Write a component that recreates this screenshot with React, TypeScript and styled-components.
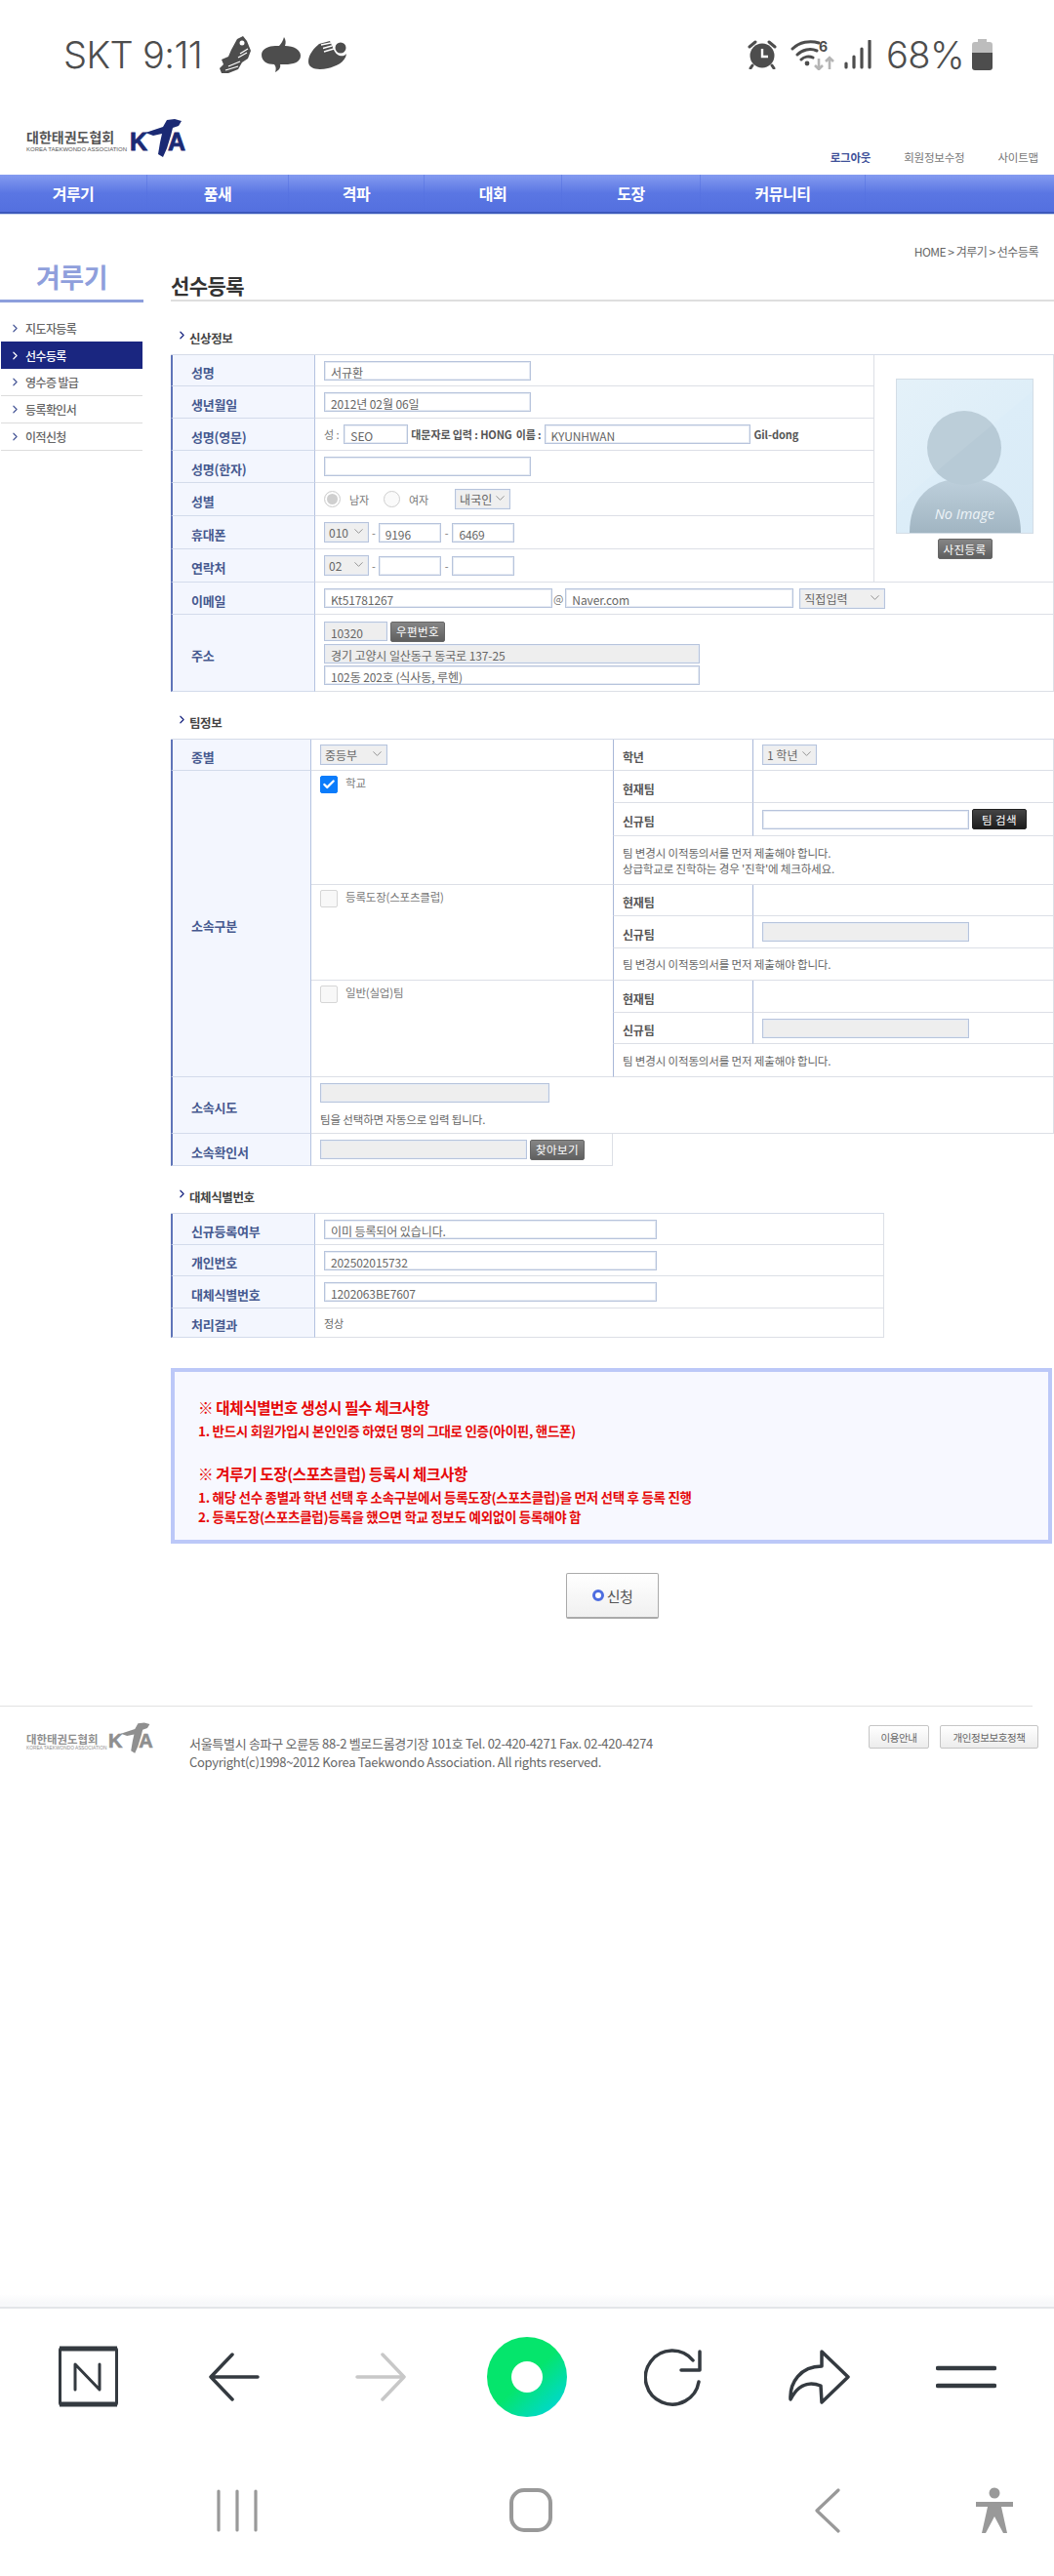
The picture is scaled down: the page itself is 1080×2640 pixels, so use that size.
import React from 'react';
import styled, { createGlobalStyle } from 'styled-components';
import { Check, ChevronDown, ChevronRight } from 'lucide-react';

const GlobalStyle = createGlobalStyle`
  html, body {
    margin: 0;
    padding: 0;
    background: #fff;
    font-family: "Noto Sans CJK KR", "Noto Sans", sans-serif;
    color: #555;
  }
  * { box-sizing: border-box; }
`;

const Page = styled.div`
  width: 1080px;
  min-height: 2640px;
  display: flex;
  flex-direction: column;
  overflow: hidden;
`;

/* status bar */
const StatusBar = styled.div`
  height: 112px;
  padding: 33px 63px 0 65px;
  display: flex;
  align-items: flex-start;
  justify-content: space-between;
`;

const StatusGroup = styled.div`
  display: flex;
  align-items: center;
  height: 46px;
`;

const StatusText = styled.span<{ $ml?: number }>`
  margin-left: ${(p) => p.$ml ?? 0}px;
  font-family: Inter, sans-serif;
  font-weight: 300;
  font-size: 38px;
  letter-spacing: -0.6px;
  line-height: 46px;
  color: #4d4d4d;
  white-space: nowrap;
`;

const StatusIcon = styled.svg<{ $gap?: number }>`
  display: block;
  margin-left: ${(p) => p.$gap ?? 0}px;
  flex: none;
`;

/* header */
const HeaderRow = styled.div`
  height: 67px;
  padding: 0 16px 0 27px;
  display: flex;
  justify-content: space-between;
`;

const LogoWrap = styled.div<{ $small?: boolean }>`
  display: flex;
  align-items: flex-end;
  gap: ${(p) => (p.$small ? 4 : 6)}px;
  height: ${(p) => (p.$small ? 33 : 50)}px;
  padding-top: ${(p) => (p.$small ? 0 : 10)}px;
  flex: none;
  & > svg { display: block; flex: none; }
`;

const LogoText = styled.div<{ $small?: boolean }>`
  display: flex;
  flex-direction: column;
  width: ${(p) => (p.$small ? 80 : 100)}px;
  padding-bottom: ${(p) => (p.$small ? 3 : 5)}px;
  color: ${(p) => (p.$small ? '#8f8f8f' : '#555')};
`;

const LogoKo = styled.span<{ $small?: boolean }>`
  font-size: ${(p) => (p.$small ? 11.4 : 14)}px;
  line-height: ${(p) => (p.$small ? 14 : 17)}px;
  font-weight: 700;
  white-space: nowrap;
`;

const LogoEn = styled.span<{ $small?: boolean }>`
  font-family: "Liberation Sans", sans-serif;
  font-size: ${(p) => (p.$small ? 4.8 : 6)}px;
  line-height: ${(p) => (p.$small ? 6 : 8)}px;
  white-space: nowrap;
`;

const TopLinks = styled.div`
  display: flex;
  gap: 34px;
  padding-top: 41px;
`;

const TopLink = styled.a<{ $active?: boolean }>`
  font-size: 11.5px;
  line-height: 16px;
  letter-spacing: -0.2px;
  color: ${(p) => (p.$active ? '#3f5199' : '#777')};
  font-weight: ${(p) => (p.$active ? 700 : 400)};
`;

const NavBar = styled.nav`
  height: 40px;
  display: grid;
  grid-template-columns: 151px 145px 139px 141px 142px 169px 1fr;
  background: linear-gradient(#849bf0 0, #5a76e3 50%, #5470df 100%);
  border-bottom: 2px solid #3c58bb;
  box-shadow: 0 1px 0 #c9d6ee;
`;

const NavItem = styled.a`
  display: flex;
  align-items: center;
  justify-content: center;
  color: #fff;
  font-size: 16px;
  font-weight: 700;
  letter-spacing: -0.5px;
  border-right: 1px solid rgba(84, 112, 223, 0.5);
`;

/* body */
const Body = styled.div`
  display: flex;
  align-items: flex-start;
`;

const Sidebar = styled.aside`
  width: 147px;
  flex: none;
  margin-right: 28px;
  padding-top: 43px;
`;

const SideTitle = styled.h2`
  margin: 0;
  height: 48px;
  border-bottom: 3px solid #8d9fdc;
  color: #8f9fdc;
  font-size: 27px;
  line-height: 44px;
  font-weight: 700;
  text-align: center;
  letter-spacing: -0.5px;
`;

const SideMenu = styled.ul`
  list-style: none;
  margin: 12px 0 0;
  padding: 0 1px;
`;

const SideItem = styled.li<{ $active?: boolean; $plain?: boolean }>`
  height: 28px;
  display: flex;
  align-items: center;
  gap: 4px;
  padding-left: 8px;
  font-size: 12px;
  letter-spacing: -0.6px;
  font-weight: 500;
  color: ${(p) => (p.$active ? '#fff' : '#666')};
  background: ${(p) => (p.$active ? '#1a2680' : 'transparent')};
  border-bottom: ${(p) => (p.$plain ? '0' : '1px solid #dcdcdc')};
  & svg { color: ${(p) => (p.$active ? '#fff' : '#4a5a99')}; flex: none; }
`;

const Main = styled.main`
  width: 905px;
  flex: none;
  padding-top: 31px;
`;

const Crumb = styled.div`
  height: 16px;
  padding-right: 16px;
  font-size: 12px;
  line-height: 16px;
  letter-spacing: -0.5px;
  text-align: right;
  color: #666;
`;

const PageTitle = styled.h1`
  margin: 0;
  height: 43px;
  padding-top: 11px;
  font-size: 21px;
  line-height: 30px;
  font-weight: 700;
  letter-spacing: -0.6px;
  color: #333;
  border-bottom: 2px solid #dedede;
`;

const SectionHead = styled.h3<{ $first?: boolean }>`
  margin: ${(p) => (p.$first ? 30 : 24)}px 0 0;
  height: 24px;
  padding-left: 5px;
  display: flex;
  align-items: flex-start;
  gap: 1px;
  font-size: 12.5px;
  line-height: 16px;
  font-weight: 700;
  letter-spacing: -0.4px;
  color: #444;
  & svg { color: #1a2680; margin-top: -2px; flex: none; }
`;

const FormTable = styled.table<{ $width?: number }>`
  width: ${(p) => p.$width ?? 905}px;
  table-layout: fixed;
  border-collapse: separate;
  border-spacing: 0;
  border-top: 1px solid #d5dbe8;
`;

const Col = styled.col<{ $w?: number }>`
  width: ${(p) => (p.$w ? `${p.$w}px` : 'auto')};
`;

const Row = styled.tr<{ $h: number }>`
  height: ${(p) => p.$h}px;
`;

const Label = styled.th`
  padding: 4px 0 0 19px;
  text-align: left;
  font-size: 13px;
  font-weight: 700;
  letter-spacing: -0.2px;
  color: #46598f;
  background: #f3f6fe;
  border-left: 2px solid #5f74b8;
  border-right: 1px solid #b4c2e0;
  border-bottom: 1px solid #d3dbeb;
`;

const SubLabel = styled.th`
  padding: 4px 0 0 9px;
  text-align: left;
  font-size: 12px;
  font-weight: 700;
  letter-spacing: -0.2px;
  color: #555;
  background: #fff;
  border-left: 1px solid #a9b8d8;
  border-right: 1px solid #a9b8d8;
  border-bottom: 1px solid #dcdfe6;
`;

const Cell = styled.td<{ $pad?: number; $top?: boolean; $edge?: boolean; $open?: boolean }>`
  padding: 0 0 0 ${(p) => p.$pad ?? 9}px;
  vertical-align: ${(p) => (p.$top ? 'top' : 'middle')};
  border-bottom: ${(p) => (p.$open ? '0' : '1px solid #dcdfe6')};
  border-right: ${(p) => (p.$edge ? '1px solid #dcdfe6' : '0')};
  font-size: 12px;
  color: #666;
`;

const NoteCell = styled(Cell)`
  border-left: 1px solid #a9b8d8;
`;

const PhotoCell = styled.td`
  padding: 24px 0 0 22px;
  vertical-align: top;
  border-left: 1px solid #dcdfe6;
  border-right: 1px solid #dcdfe6;
  border-bottom: 1px solid #dcdfe6;
`;

const PhotoBox = styled.div`
  position: relative;
  width: 141px;
  height: 159px;
  border: 1px solid #d3dde6;
  background: linear-gradient(135deg, #e2f0f9 0, #dcedf8 50%, #d9ebf7 100%);
  overflow: hidden;
  & svg { display: block; }
`;

const NoImage = styled.span`
  position: absolute;
  left: 0;
  right: 0;
  top: 129px;
  text-align: center;
  font-family: "Open Sans", sans-serif;
  font-style: italic;
  font-size: 14.5px;
  line-height: 18px;
  color: #eef4f8;
`;

const PhotoAction = styled.div`
  width: 141px;
  display: flex;
  justify-content: center;
  margin-top: 5px;
`;

const Line = styled.div<{ $gap?: number }>`
  display: flex;
  align-items: center;
  gap: ${(p) => p.$gap ?? 0}px;
  white-space: nowrap;
`;

const Stack = styled.div<{ $gap?: number }>`
  display: flex;
  flex-direction: column;
  gap: ${(p) => p.$gap ?? 0}px;
`;

const Field = styled.input<{ $w: number; $gray?: boolean }>`
  display: block;
  width: ${(p) => p.$w}px;
  height: 20px;
  padding: 3px 0 0 6px;
  flex: none;
  border: 1px solid #b7c4dc;
  box-shadow: inset 0 0 0 1px #e6ebf3;
  border-radius: 0;
  outline: none;
  background: ${(p) => (p.$gray ? '#eee' : '#fff')};
  font-family: "Noto Sans CJK KR", "Noto Sans", sans-serif;
  font-size: 12px;
  line-height: 16px;
  letter-spacing: -0.1px;
  color: #666;
`;

const SelectBox = styled.div<{ $w: number; $ml?: number }>`
  position: relative;
  width: ${(p) => p.$w}px;
  height: 21px;
  margin-left: ${(p) => p.$ml ?? 0}px;
  flex: none;
  & svg { position: absolute; right: 3px; top: 2px; color: #777; pointer-events: none; }
`;

const SelectField = styled.select`
  display: block;
  width: 100%;
  height: 100%;
  padding: 0 0 0 4px;
  appearance: none;
  border: 1px solid #b7c4dc;
  box-shadow: inset 0 0 0 1px #e6ebf3;
  border-radius: 0;
  background: #efefef;
  font-family: "Noto Sans CJK KR", "Noto Sans", sans-serif;
  font-size: 12px;
  color: #666;
`;

const Small = styled.span<{ $ml?: number; $mr?: number; $strong?: boolean }>`
  margin-left: ${(p) => p.$ml ?? 0}px;
  margin-right: ${(p) => p.$mr ?? 0}px;
  font-size: 11px;
  line-height: 16px;
  letter-spacing: -0.1px;
  color: ${(p) => (p.$strong ? '#555' : '#777')};
  font-weight: ${(p) => (p.$strong ? 700 : 400)};
`;

const Radio = styled.span<{ $on?: boolean; $ml?: number }>`
  width: 17px;
  height: 17px;
  margin-left: ${(p) => p.$ml ?? 0}px;
  border-radius: 50%;
  border: 1px solid #cfcfcf;
  background: #fafafa;
  box-shadow: ${(p) => (p.$on ? 'inset 0 0 0 2px #fff, inset 0 0 0 9px #cfcfcf' : 'none')};
  flex: none;
`;

const Tick = styled.span<{ $on?: boolean }>`
  width: 18px;
  height: 18px;
  flex: none;
  display: flex;
  align-items: center;
  justify-content: center;
  border-radius: 2px;
  border: 1px solid ${(p) => (p.$on ? '#0b7cfb' : '#d6d6d6')};
  background: ${(p) => (p.$on ? '#0b7cfb' : '#f8f8f8')};
  color: #fff;
`;

const TickRow = styled.div`
  display: flex;
  align-items: flex-start;
  gap: 8px;
  padding-top: 5px;
  font-size: 11.5px;
  line-height: 15px;
  letter-spacing: -0.2px;
  color: #777;
`;

const Note = styled.p`
  margin: 0;
  font-size: 11.5px;
  line-height: 16px;
  letter-spacing: -0.15px;
  color: #666;
`;

const Help = styled.p`
  margin: 9px 0 0;
  font-size: 11.5px;
  line-height: 16px;
  letter-spacing: -0.15px;
  color: #666;
`;

const SmallButton = styled.button<{ $dark?: boolean }>`
  width: 56px;
  height: 21px;
  padding: 0;
  flex: none;
  border: 1px solid ${(p) => (p.$dark ? '#222' : '#666')};
  border-radius: 2px;
  background: ${(p) => (p.$dark ? 'linear-gradient(#444, #1d1d1d)' : 'linear-gradient(#858585, #5f5f5f)')};
  color: #fff;
  font-family: "Noto Sans CJK KR", sans-serif;
  font-size: 11.5px;
  line-height: 18px;
  letter-spacing: 0.4px;
`;

const PlainValue = styled.span`
  font-size: 11px;
  color: #666;
`;

const Notice = styled.section`
  width: 903px;
  height: 180px;
  margin-top: 31px;
  padding: 25px 0 0 24px;
  border: 4px solid #bcc8f8;
  background: #f7f8ff;
  color: #e60a0a;
  font-weight: 700;
`;

const NoticeHead = styled.div<{ $gap?: boolean }>`
  margin-top: ${(p) => (p.$gap ? 23 : 0)}px;
  font-size: 15.6px;
  line-height: 22px;
  letter-spacing: -0.4px;
`;

const NoticeLine = styled.div`
  margin-top: 3px;
  font-size: 13.5px;
  line-height: 20px;
  letter-spacing: -0.3px;
  & + & { margin-top: 0; }
`;

const ActionRow = styled.div`
  display: flex;
  justify-content: center;
  margin-top: 30px;
`;

const SubmitButton = styled.button`
  width: 95px;
  height: 47px;
  padding: 0;
  display: flex;
  align-items: center;
  justify-content: center;
  gap: 3px;
  border: 1px solid #aaa;
  border-bottom: 2px solid #aaa;
  border-radius: 2px;
  background: linear-gradient(#fff, #f0f0f0);
  font-family: "Noto Sans CJK KR", sans-serif;
  font-size: 15px;
  letter-spacing: -0.5px;
  color: #555;
`;

const SubmitDot = styled.span`
  width: 12px;
  height: 12px;
  border-radius: 50%;
  border: 3px solid #4d6de0;
  background: #fff;
`;

/* footer */
const Footer = styled.footer`
  width: 1058px;
  margin-top: 89px;
  padding: 16px 0 0 27px;
  border-top: 1px solid #e2e2e2;
  display: flex;
  align-items: flex-start;
  position: relative;
`;

const FooterInfo = styled.div`
  margin-left: 35px;
  padding-top: 12px;
  font-size: 13px;
  line-height: 19px;
  letter-spacing: -0.3px;
  color: #666;
  white-space: nowrap;
`;

const FooterButtons = styled.div`
  position: absolute;
  left: 890px;
  top: 19px;
  display: flex;
  gap: 11px;
`;

const FooterButton = styled.button<{ $w: number }>`
  width: ${(p) => p.$w}px;
  height: 24px;
  padding: 0;
  flex: none;
  border: 1px solid #c5c5c5;
  border-radius: 2px;
  background: linear-gradient(#fff, #ececec);
  font-family: "Noto Sans CJK KR", sans-serif;
  font-size: 10.5px;
  letter-spacing: -0.4px;
  color: #666;
  white-space: nowrap;
`;

/* browser chrome */
const BrowserBar = styled.div`
  margin-top: auto;
  height: 290px;
  background: linear-gradient(#fff 0, #fff 1px, #f7f8fa 10px, #f7f8fa 14px, #e3e5e9 14px, #e3e5e9 16px, #fff 16px);
  padding-top: 16px;
`;

const ToolRow = styled.div`
  height: 139px;
  padding: 0 15px;
  display: grid;
  grid-template-columns: repeat(7, 150px);
  align-items: center;
  justify-items: center;
`;

const SystemRow = styled.div`
  height: 135px;
  padding-left: 93px;
  display: grid;
  grid-template-columns: 300px 302px 306px 36px;
  align-items: center;
  justify-items: center;
`;

const LogoMark = ({ small }: { small?: boolean }) => {
  const color = small ? '#8f8f8f' : '#1b2a74';
  return (
    <svg width={small ? 48 : 60} height={small ? 33 : 40} viewBox="0 0 60 40">
      <text x="0" y="32" fontFamily="Liberation Sans" fontWeight="700" fontSize="25" fill={color} stroke={color} strokeWidth="0.8">K</text>
      <text x="41" y="32" textAnchor="middle" dx="7" fontFamily="Liberation Sans" fontWeight="700" fontSize="25" fill={color} stroke={color} strokeWidth="0.8">A</text>
      <path
        d="M16 14 L34 8 L38 1 L46 0 L53 2 L50 7 L44 9 L42 17 L38 30 L34 39 L29 36 L31 24 L33 15 L24 17 Z"
        fill={color}
      />
    </svg>
  );
};

const Logo = ({ small }: { small?: boolean }) => (
  <LogoWrap $small={small}>
    <LogoText $small={small}>
      <LogoKo $small={small}>대한태권도협회</LogoKo>
      <LogoEn $small={small}>KOREA TAEKWONDO ASSOCIATION</LogoEn>
    </LogoText>
    <LogoMark small={small} />
  </LogoWrap>
);

const Arrow = () => <ChevronRight size={13} strokeWidth={2.2} />;

const Select = ({ w, value, ml }: { w: number; value: string; ml?: number }) => (
  <SelectBox $w={w} $ml={ml}>
    <SelectField defaultValue={value}>
      <option>{value}</option>
    </SelectField>
    <ChevronDown size={15} strokeWidth={1.2} />
  </SelectBox>
);

const Avatar = () => (
  <svg width="139" height="157" viewBox="0 0 139 157">
    <defs>
      <linearGradient id="av" x1="0" y1="0" x2="0" y2="1">
        <stop offset="0" stopColor="#bed0dc" />
        <stop offset="1" stopColor="#a1b5c2" />
      </linearGradient>
    </defs>
    <path d="M13 157 C13 118 38 101 70 101 C101 101 127 118 127 157 Z" fill="url(#av)" />
    <circle cx="69" cy="70" r="38" fill="#b7cad6" />
    <path d="M0 128 L139 12 L139 0 L0 0 Z" fill="#fff" opacity="0.08" />
  </svg>
);

const TeamBlock = ({
  lead,
  label,
  rows,
  school,
  note,
}: {
  lead?: React.ReactNode;
  label: string;
  rows: [number, number, number];
  school?: boolean;
  note: React.ReactNode;
}) => (
  <>
    <Row $h={rows[0]}>
      {lead}
      <Cell rowSpan={3} $top>
        <TickRow>
          <Tick $on={school}>{school && <Check size={14} strokeWidth={4} />}</Tick>
          {label}
        </TickRow>
      </Cell>
      <SubLabel>현재팀</SubLabel>
      <Cell $edge />
    </Row>
    <Row $h={rows[1]}>
      <SubLabel>신규팀</SubLabel>
      <Cell $edge>
        <Line $gap={3}>
          <Field $w={212} $gray={!school} readOnly />
          {school && <SmallButton $dark>팀 검색</SmallButton>}
        </Line>
      </Cell>
    </Row>
    <Row $h={rows[2]}>
      <NoteCell colSpan={2} $edge>
        <Note>{note}</Note>
      </NoteCell>
    </Row>
  </>
);

const STROKE = '#343a40';
const SYSTEM = '#999';

export default function App() {
  return (
    <Page>
      <GlobalStyle />
      <StatusBar>
        <StatusGroup>
          <StatusText>SKT 9:11</StatusText>
          <StatusIcon $gap={18} width="32" height="38" viewBox="0 0 32 38">
            <path d="M18 3 L24 0 L28 5 L32 15 L29 23 L23 27 L19 34 L9 38 L2 38 L0 33 L4 29 L2 24 L9 21 L12 14 Z" fill="#4d4d4d" />
            <path d="M6 35 L19 31 M9 31 L21 26 M19 22 L28 17 M21 18 L29 13" stroke="#fff" strokeWidth="1.3" />
            <circle cx="23" cy="7" r="2.5" fill="#fff" />
          </StatusIcon>
          <StatusIcon $gap={11} width="40" height="36" viewBox="0 0 40 36">
            <path d="M23 0 C25 3 25 6 24 9 C33 9 40 13 40 19 C40 26 32 28 24 28 L19 28 C20 31 18 34 14 36 C15 33 15 30 13 28 C6 28 0 25 0 18 C0 12 8 9 14 9 L18 9 C20 7 22 4 23 0 Z" fill="#4d4d4d" />
          </StatusIcon>
          <StatusIcon $gap={8} width="39" height="29" viewBox="0 0 39 29">
            <path d="M11 3 L22 0 L26 9 C29 16 36 17 39 13 C38 22 28 26 20 28 C10 30 0 29 0 21 C0 14 6 7 11 3 Z" fill="#4d4d4d" />
            <circle cx="33" cy="7" r="5.5" fill="#4d4d4d" />
            <path d="M13 4 L23 2 M15 7.5 L24 5 M16 11 L26 8" stroke="#fff" strokeWidth="1.4" />
          </StatusIcon>
        </StatusGroup>
        <StatusGroup>
          <StatusIcon width="30" height="30" viewBox="0 0 30 30">
            <circle cx="15" cy="16" r="12.5" fill="#4d4d4d" />
            <path d="M15 9 V17 H21" stroke="#fff" strokeWidth="2.4" fill="none" />
            <path d="M2 7 L8 2 M28 7 L22 2 M5 26 L3 29 M25 26 L27 29" stroke="#4d4d4d" strokeWidth="3" strokeLinecap="round" />
          </StatusIcon>
          <StatusIcon $gap={14} width="46" height="32" viewBox="0 0 46 32">
            <path d="M2 10 C9 3 20 1 29 4 M7 16 C12 11 20 9 27 12 M11 21 C14 18 19 17 23 19" stroke="#4d4d4d" strokeWidth="3" fill="none" strokeLinecap="round" />
            <circle cx="17" cy="25" r="2.4" fill="#4d4d4d" />
            <text x="29" y="13" fontFamily="Inter" fontWeight="700" fontSize="14" fill="#4d4d4d">6</text>
            <path d="M29 20 V31 M25 27 L29 31 L33 27 M40 31 V19 M36 23 L40 19 L44 23" stroke="#b5b5b5" strokeWidth="2.6" fill="none" />
          </StatusIcon>
          <StatusIcon $gap={9} width="28" height="30" viewBox="0 0 28 30">
            <path d="M2 24 V28 M10 17 V28 M18 9 V28 M26 1 V28" stroke="#4d4d4d" strokeWidth="3.2" strokeLinecap="round" />
          </StatusIcon>
          <StatusText $ml={15}>68%</StatusText>
          <StatusIcon $gap={8} width="21" height="32" viewBox="0 0 21 32">
            <path d="M6 0 H15 V3 H18 Q21 3 21 6 V14 H0 V6 Q0 3 3 3 H6 Z" fill="#bdbdbd" />
            <path d="M0 14 H21 V29 Q21 32 18 32 H3 Q0 32 0 29 Z" fill="#4d4d4d" />
          </StatusIcon>
        </StatusGroup>
      </StatusBar>

      <HeaderRow>
        <Logo />
        <TopLinks>
          <TopLink $active>로그아웃</TopLink>
          <TopLink>회원정보수정</TopLink>
          <TopLink>사이트맵</TopLink>
        </TopLinks>
      </HeaderRow>

      <NavBar>
        <NavItem>겨루기</NavItem>
        <NavItem>품새</NavItem>
        <NavItem>격파</NavItem>
        <NavItem>대회</NavItem>
        <NavItem>도장</NavItem>
        <NavItem>커뮤니티</NavItem>
      </NavBar>

      <Body>
        <Sidebar>
          <SideTitle>겨루기</SideTitle>
          <SideMenu>
            <SideItem $plain><Arrow />지도자등록</SideItem>
            <SideItem $active $plain><Arrow />선수등록</SideItem>
            <SideItem><Arrow />영수증 발급</SideItem>
            <SideItem><Arrow />등록확인서</SideItem>
            <SideItem><Arrow />이적신청</SideItem>
          </SideMenu>
        </Sidebar>

        <Main>
          <Crumb>HOME &gt; 겨루기 &gt; 선수등록</Crumb>
          <PageTitle>선수등록</PageTitle>

          <SectionHead $first><Arrow />신상정보</SectionHead>
          <FormTable>
            <colgroup>
              <Col $w={148} />
              <Col $w={572} />
              <Col />
            </colgroup>
            <tbody>
              <Row $h={32}>
                <Label>성명</Label>
                <Cell><Field $w={212} defaultValue="서규환" readOnly /></Cell>
                <PhotoCell rowSpan={7}>
                  <PhotoBox>
                    <Avatar />
                    <NoImage>No Image</NoImage>
                  </PhotoBox>
                  <PhotoAction><SmallButton>사진등록</SmallButton></PhotoAction>
                </PhotoCell>
              </Row>
              <Row $h={33}>
                <Label>생년월일</Label>
                <Cell><Field $w={212} defaultValue="2012년 02월 06일" readOnly /></Cell>
              </Row>
              <Row $h={33}>
                <Label>성명(영문)</Label>
                <Cell>
                  <Line>
                    <Small $mr={5}>성 :</Small>
                    <Field $w={66} defaultValue="SEO" readOnly />
                    <Small $ml={3} $strong>대문자로 입력 : HONG</Small>
                    <Small $ml={4} $mr={3} $strong>이름 :</Small>
                    <Field $w={211} defaultValue="KYUNHWAN" readOnly />
                    <Small $ml={4} $strong>Gil-dong</Small>
                  </Line>
                </Cell>
              </Row>
              <Row $h={33}>
                <Label>성명(한자)</Label>
                <Cell><Field $w={212} readOnly /></Cell>
              </Row>
              <Row $h={34}>
                <Label>성별</Label>
                <Cell>
                  <Line>
                    <Radio $on />
                    <Small $ml={9}>남자</Small>
                    <Radio $ml={15} />
                    <Small $ml={9}>여자</Small>
                    <Select w={57} value="내국인" ml={27} />
                  </Line>
                </Cell>
              </Row>
              <Row $h={34}>
                <Label>휴대폰</Label>
                <Cell>
                  <Line>
                    <Select w={46} value="010" />
                    <Small $ml={3} $mr={3}>-</Small>
                    <Field $w={64} defaultValue="9196" readOnly />
                    <Small $ml={4} $mr={4}>-</Small>
                    <Field $w={64} defaultValue="6469" readOnly />
                  </Line>
                </Cell>
              </Row>
              <Row $h={34}>
                <Label>연락처</Label>
                <Cell>
                  <Line>
                    <Select w={46} value="02" />
                    <Small $ml={3} $mr={3}>-</Small>
                    <Field $w={64} readOnly />
                    <Small $ml={4} $mr={4}>-</Small>
                    <Field $w={64} readOnly />
                  </Line>
                </Cell>
              </Row>
              <Row $h={33}>
                <Label>이메일</Label>
                <Cell colSpan={2} $edge>
                  <Line>
                    <Field $w={234} defaultValue="Kt51781267" readOnly />
                    <Small $ml={1} $mr={2}>@</Small>
                    <Field $w={234} defaultValue="Naver.com" readOnly />
                    <Select w={88} value="직접입력" ml={6} />
                  </Line>
                </Cell>
              </Row>
              <Row $h={79}>
                <Label>주소</Label>
                <Cell colSpan={2} $edge>
                  <Stack $gap={2}>
                    <Line $gap={3}>
                      <Field $w={65} $gray defaultValue="10320" readOnly />
                      <SmallButton>우편번호</SmallButton>
                    </Line>
                    <Field $w={385} $gray defaultValue="경기 고양시 일산동구 동국로 137-25" readOnly />
                    <Field $w={385} defaultValue="102동 202호 (식사동, 루헨)" readOnly />
                  </Stack>
                </Cell>
              </Row>
            </tbody>
          </FormTable>

          <SectionHead><Arrow />팀정보</SectionHead>
          <FormTable>
            <colgroup>
              <Col $w={144} />
              <Col $w={309} />
              <Col $w={144} />
              <Col />
            </colgroup>
            <tbody>
              <Row $h={32}>
                <Label>종별</Label>
                <Cell><Select w={69} value="중등부" /></Cell>
                <SubLabel>학년</SubLabel>
                <Cell $edge><Select w={56} value="1 학년" /></Cell>
              </Row>
              <TeamBlock
                school
                lead={<Label rowSpan={9}>소속구분</Label>}
                label="학교"
                rows={[33, 34, 50]}
                note={
                  <>
                    팀 변경시 이적동의서를 먼저 제출해야 합니다.
                    <br />
                    상급학교로 진학하는 경우 '진학'에 체크하세요.
                  </>
                }
              />
              <TeamBlock
                label="등록도장(스포츠클럽)"
                rows={[32, 33, 33]}
                note="팀 변경시 이적동의서를 먼저 제출해야 합니다."
              />
              <TeamBlock
                label="일반(실업)팀"
                rows={[33, 32, 34]}
                note="팀 변경시 이적동의서를 먼저 제출해야 합니다."
              />
              <Row $h={58}>
                <Label>소속시도</Label>
                <Cell colSpan={3} $edge>
                  <Field $w={235} $gray readOnly />
                  <Help>팀을 선택하면 자동으로 입력 됩니다.</Help>
                </Cell>
              </Row>
              <Row $h={33}>
                <Label>소속확인서</Label>
                <Cell $edge>
                  <Line $gap={3}>
                    <Field $w={212} $gray readOnly />
                    <SmallButton>찾아보기</SmallButton>
                  </Line>
                </Cell>
                <Cell colSpan={2} $open />
              </Row>
            </tbody>
          </FormTable>

          <SectionHead><Arrow />대체식별번호</SectionHead>
          <FormTable $width={731}>
            <colgroup>
              <Col $w={148} />
              <Col />
            </colgroup>
            <tbody>
              <Row $h={32}>
                <Label>신규등록여부</Label>
                <Cell $edge><Field $w={341} defaultValue="이미 등록되어 있습니다." readOnly /></Cell>
              </Row>
              <Row $h={32}>
                <Label>개인번호</Label>
                <Cell $edge><Field $w={341} defaultValue="202502015732" readOnly /></Cell>
              </Row>
              <Row $h={33}>
                <Label>대체식별번호</Label>
                <Cell $edge><Field $w={341} defaultValue="1202063BE7607" readOnly /></Cell>
              </Row>
              <Row $h={30}>
                <Label>처리결과</Label>
                <Cell $edge><PlainValue>정상</PlainValue></Cell>
              </Row>
            </tbody>
          </FormTable>

          <Notice>
            <NoticeHead>※ 대체식별번호 생성시 필수 체크사항</NoticeHead>
            <NoticeLine>1. 반드시 회원가입시 본인인증 하였던 명의 그대로 인증(아이핀, 핸드폰)</NoticeLine>
            <NoticeHead $gap>※ 겨루기 도장(스포츠클럽) 등록시 체크사항</NoticeHead>
            <NoticeLine>1. 해당 선수 종별과 학년 선택 후 소속구분에서 등록도장(스포츠클럽)을 먼저 선택 후 등록 진행</NoticeLine>
            <NoticeLine>2. 등록도장(스포츠클럽)등록을 했으면 학교 정보도 예외없이 등록해야 함</NoticeLine>
          </Notice>

          <ActionRow>
            <SubmitButton>
              <SubmitDot />
              신청
            </SubmitButton>
          </ActionRow>
        </Main>
      </Body>

      <Footer>
        <Logo small />
        <FooterInfo>
          서울특별시 송파구 오륜동 88-2 벨로드롬경기장 101호 Tel. 02-420-4271 Fax. 02-420-4274
          <br />
          Copyright(c)1998~2012 Korea Taekwondo Association. All rights reserved.
        </FooterInfo>
        <FooterButtons>
          <FooterButton $w={62}>이용안내</FooterButton>
          <FooterButton $w={101}>개인정보보호정책</FooterButton>
        </FooterButtons>
      </Footer>

      <BrowserBar>
        <ToolRow>
          <svg width="61" height="63" viewBox="0 0 61 63" fill="none" stroke={STROKE}>
            <rect x="1.5" y="2.5" width="58" height="58" rx="2" strokeWidth="3" />
            <path d="M1 3 H60 M1 60 H60" strokeWidth="5" />
            <path d="M17 45 V19 L42 45 V19" strokeWidth="3" strokeLinecap="round" strokeLinejoin="round" />
          </svg>
          <svg width="52" height="50" viewBox="0 0 52 50" fill="none" stroke={STROKE} strokeWidth="3.5" strokeLinecap="round" strokeLinejoin="round">
            <path d="M24 2 L2 25 L24 48 M2 25 H50" />
          </svg>
          <svg width="52" height="50" viewBox="0 0 52 50" fill="none" stroke="#c8c8c8" strokeWidth="3.5" strokeLinecap="round" strokeLinejoin="round">
            <path d="M28 2 L50 25 L28 48 M50 25 H2" />
          </svg>
          <svg width="84" height="84" viewBox="0 0 84 84">
            <defs>
              <linearGradient id="go" x1="0.3" y1="0.3" x2="0.85" y2="0.9">
                <stop offset="0.35" stopColor="#05e56c" />
                <stop offset="1" stopColor="#00d8cc" />
              </linearGradient>
            </defs>
            <circle cx="42" cy="42" r="41" fill="url(#go)" />
            <circle cx="42" cy="42" r="16" fill="#fff" />
          </svg>
          <svg width="60" height="62" viewBox="0 0 60 62" fill="none" stroke={STROKE} strokeWidth="3.5" strokeLinecap="round" strokeLinejoin="round">
            <path d="M56 36 A27.5 27.5 0 1 1 50 14" />
            <path d="M57 5 V24 H38" />
          </svg>
          <svg width="64" height="58" viewBox="0 0 64 58" fill="none" stroke={STROKE} strokeWidth="3.5" strokeLinejoin="round" strokeLinecap="round">
            <path d="M34 3 L61 29 L34 55 L33 38 C18 32 8 40 2 52 C1 35 12 18 34 18 Z" />
          </svg>
          <svg width="62" height="24" viewBox="0 0 62 24" fill="none" stroke={STROKE} strokeWidth="4.5" strokeLinecap="round">
            <path d="M2 3 H60 M2 21 H60" />
          </svg>
        </ToolRow>
        <SystemRow>
          <svg width="42" height="44" viewBox="0 0 42 44" fill="none" stroke={SYSTEM} strokeWidth="3.2" strokeLinecap="round">
            <path d="M2 2 V42 M21 2 V42 M40 2 V42" />
          </svg>
          <svg width="44" height="45" viewBox="0 0 44 45" fill="none" stroke={SYSTEM} strokeWidth="4">
            <rect x="2" y="2" width="40" height="41" rx="13" />
          </svg>
          <svg width="26" height="46" viewBox="0 0 26 46" fill="none" stroke={SYSTEM} strokeWidth="3.2" strokeLinecap="round" strokeLinejoin="round">
            <path d="M24 2 L2 23 L24 44" />
          </svg>
          <svg width="40" height="48" viewBox="0 0 40 48" fill={SYSTEM}>
            <circle cx="20" cy="6" r="5.5" />
            <path d="M1 15 H39 V20 H27 L33 47 H29 L20 30 L11 47 H7 L13 20 H1 Z" />
          </svg>
        </SystemRow>
      </BrowserBar>
    </Page>
  );
}
